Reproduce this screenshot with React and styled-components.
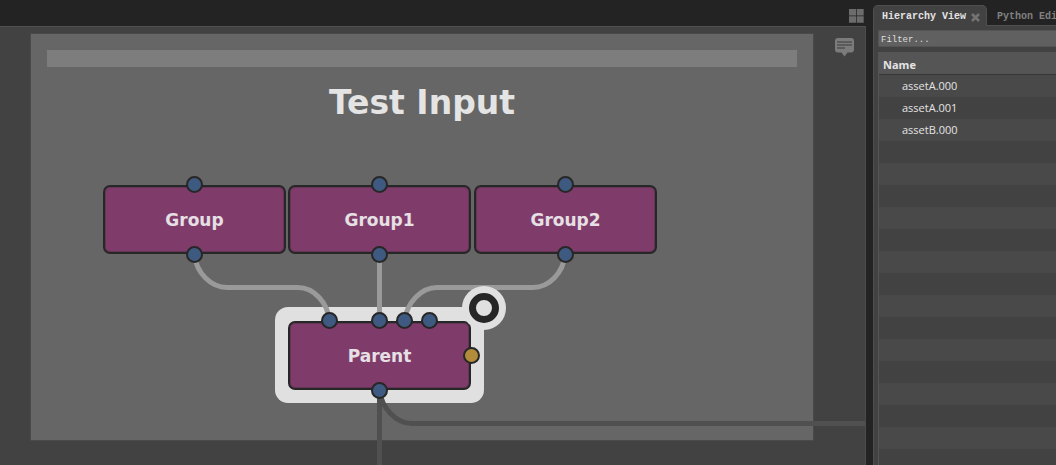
import React from "react";
import styled, { createGlobalStyle } from "styled-components";

const Global = createGlobalStyle`
  *, *::before, *::after { box-sizing: border-box; }
  body { margin: 0; background: #232323; }
`;

const Layout = styled.div`
  display: grid;
  grid-template-columns: minmax(0, 1fr) 183px;
  column-gap: 7px;
  min-height: 100vh;
  background: #232323;
`;

const GraphPane = styled.main`
  display: flex;
  flex-direction: column;
  min-width: 0;
`;

const Toolbar = styled.header`
  display: flex;
  justify-content: flex-end;
  align-items: flex-end;
  height: 26px;
  padding: 0 2px 3px 0;
`;

const IconButton = styled.button`
  display: flex;
  padding: 0;
  border: 0;
  background: none;
  cursor: pointer;
`;

const Canvas = styled.section`
  position: relative;
  flex: 1;
  overflow: hidden;
  background: #424242;
  border-top: 1px solid #505050;
  border-right: 1px solid #4b4b4b;
`;

const NoteButton = styled(IconButton)`
  position: absolute;
  top: 11px;
  right: 11px;
`;

const Backdrop = styled.div`
  position: absolute;
  left: 31px;
  top: 7px;
  width: 782px;
  height: 406px;
  padding: 16px;
  background: #666666;
  box-shadow: 0 0 0 1px #4a4a4a;
`;

const BackdropHandle = styled.div`
  height: 17px;
  background: #7d7d7d;
`;

const BackdropTitle = styled.h1`
  margin: 16px 0 0;
  font: bold 33px/40px "DejaVu Sans", sans-serif;
  text-align: center;
  color: #e4e4e4;
`;

const Halo = styled.div`
  position: absolute;
  left: ${(p) => p.$x}px;
  top: ${(p) => p.$y}px;
  width: 209px;
  height: 96px;
  border-radius: 13px;
  background: #e0e0e0;
`;

const Wires = styled.svg`
  position: absolute;
  inset: 0;
  width: 100%;
  height: 100%;
  fill: none;
  stroke-width: 5px;
`;

const NodeBox = styled.div`
  position: absolute;
  left: ${(p) => p.$x}px;
  top: ${(p) => p.$y}px;
  display: flex;
  align-items: center;
  justify-content: center;
  width: 183px;
  height: 69px;
  border: 2px solid #272727;
  border-radius: 7px;
  background: #7f3c6b;
  box-shadow: inset 0 0 0 1px rgba(39, 39, 39, 0.3);
  color: #e6e0e4;
  font: bold 17px/20px "DejaVu Sans", sans-serif;
`;

const Port = styled.span`
  position: absolute;
  left: ${(p) => p.$x}px;
  top: ${(p) => p.$y}px;
  width: 17px;
  height: 17px;
  margin: -9px 0 0 -9px;
  border: 2px solid #272727;
  border-radius: 50%;
  background: ${(p) => (p.$kind === "param" ? "#b38c3b" : "#3f5a80")};
`;

const ViewFlag = styled.span`
  position: absolute;
  left: ${(p) => p.$x}px;
  top: ${(p) => p.$y}px;
  display: flex;
  align-items: center;
  justify-content: center;
  width: 44px;
  height: 44px;
  border-radius: 50%;
  background: #e0e0e0;

  &::after {
    content: "";
    width: 30px;
    height: 30px;
    border: 7px solid #262626;
    border-radius: 50%;
  }
`;

const SidePane = styled.aside`
  display: flex;
  flex-direction: column;
  min-width: 0;
  padding-top: 5px;
  overflow: hidden;
`;

const TabBar = styled.div`
  display: flex;
  height: 20px;
`;

const Tab = styled.button`
  flex: none;
  display: flex;
  align-items: center;
  gap: 5px;
  height: ${(p) => (p.$active ? 21 : 20)}px;
  padding: ${(p) => (p.$active ? "2px 6px 0 8px" : "3px 9px 0 9px")};
  border: 1px solid ${(p) => (p.$active ? "#4f4f4f" : "transparent")};
  border-bottom: 0;
  border-radius: 5px 5px 0 0;
  background: ${(p) => (p.$active ? "#424242" : "transparent")};
  color: ${(p) => (p.$active ? "#e4e4e4" : "#808080")};
  font: bold 10px/14px "Liberation Mono", monospace;
  white-space: nowrap;
  z-index: 1;
`;

const PanelBody = styled.div`
  flex: 1;
  display: flex;
  flex-direction: column;
  gap: 5px;
  padding: 4px 0 0 4px;
  border: 1px solid #4f4f4f;
  border-width: 1px 0 0 1px;
  background: #424242;
`;

const Filter = styled.input`
  width: 100%;
  height: 17px;
  padding: 3px 2px 0;
  border: 1px solid #545454;
  border-right: 0;
  border-radius: 2px 0 0 2px;
  background: #606060;
  color: #dedede;
  font: 9px/12px "Liberation Mono", monospace;

  &::placeholder { color: #dedede; opacity: 1; }
`;

const TreeArea = styled.div`
  flex: 1;
  border-left: 1px solid #555555;
  background: repeating-linear-gradient(#494949 0 22px, #424242 22px 44px) 0 23px;
`;

const Tree = styled.table`
  width: 100%;
  border-spacing: 0;
  font: 11px/20px "Open Sans", sans-serif;
  color: #e4e4e4;
  text-align: left;
`;

const HeadCell = styled.th`
  height: 23px;
  padding: 4px 4px 0;
  border-bottom: 1px solid #363636;
  background: #555555;
  line-height: 18px;
  font-weight: bold;
`;

const Cell = styled.td`
  height: 22px;
  padding: 1px 0 1px 23px;
  background: ${(p) => (p.$odd ? "#424242" : "#494949")};
`;

const groups = [
  { name: "Group", x: 103 },
  { name: "Group1", x: 288 },
  { name: "Group2", x: 474 },
];
const parentInputs = [330, 380, 405, 430];
const assets = ["assetA.000", "assetA.001", "assetB.000"];

function GraphWires() {
  return (
    <Wires aria-hidden="true">
      <g stroke="#9a9a9a">
        <path d="M194.500 228 C196.500 246 211 260.500 227 260.500 H298 C314 260.500 328 276 329.500 294" />
        <path d="M379.500 228 V294" />
        <path d="M565 228 C563 246 549 260.500 533 260.500 H437 C421 260.500 406.500 276 404.500 294" />
      </g>
      <g stroke="#505050">
        <path d="M379.500 363 V4000" />
        <path d="M379.500 363 C381.500 381 396 396.500 412 396.500 H6000" />
      </g>
    </Wires>
  );
}

export default function App() {
  return (
    <Layout>
      <Global />
      <GraphPane>
        <Toolbar>
          <IconButton aria-label="Pane layout">
            <svg width="15" height="14" viewBox="0 0 15 14" fill="#6c6c6c">
              <path d="M0 0h7v6.500H0zM7.700 0h7v6.500h-7zM0 7.200h7v6.500H0zM7.700 7.200h7v6.500h-7z" />
            </svg>
          </IconButton>
        </Toolbar>
        <Canvas>
          <Backdrop>
            <BackdropHandle />
            <BackdropTitle>Test Input</BackdropTitle>
          </Backdrop>
          <Halo $x={275} $y={280} />
          <GraphWires />
          {groups.map((g) => (
            <React.Fragment key={g.name}>
              <NodeBox $x={g.x} $y={158}>{g.name}</NodeBox>
              <Port $x={g.x + 92} $y={158} />
              <Port $x={g.x + 92} $y={228} />
            </React.Fragment>
          ))}
          <NodeBox $x={288} $y={294}>Parent</NodeBox>
          {parentInputs.map((x) => <Port key={x} $x={x} $y={294} />)}
          <Port $x={380} $y={364} />
          <Port $x={472} $y={329} $kind="param" />
          <ViewFlag $x={462} $y={259} />
          <NoteButton aria-label="Annotations">
            <svg width="19" height="19" viewBox="0 0 19 19">
              <path fill="#7b7b7b" d="M3 0h13a3 3 0 0 1 3 3v8.500a3 3 0 0 1-3 3h-3.500l-3 4-3-4H3a3 3 0 0 1-3-3V3a3 3 0 0 1 3-3z" />
              <path stroke="#505050" strokeWidth="1.600" d="M2 4h15M2 7h15M2 10h8" />
            </svg>
          </NoteButton>
        </Canvas>
      </GraphPane>
      <SidePane>
        <TabBar role="tablist">
          <Tab role="tab" aria-selected="true" $active>
            Hierarchy View
            <svg width="9" height="9" viewBox="0 0 9 9" stroke="#737373" strokeWidth="2.600" aria-hidden="true">
              <path d="M1 1l7 7M8 1l-7 7" />
            </svg>
          </Tab>
          <Tab role="tab" aria-selected="false">Python Editor</Tab>
        </TabBar>
        <PanelBody>
          <Filter placeholder="Filter..." aria-label="Filter" />
          <TreeArea>
            <Tree>
              <thead>
                <tr><HeadCell scope="col">Name</HeadCell></tr>
              </thead>
              <tbody>
                {assets.map((name, i) => (
                  <tr key={name}><Cell $odd={i % 2 === 1}>{name}</Cell></tr>
                ))}
              </tbody>
            </Tree>
          </TreeArea>
        </PanelBody>
      </SidePane>
    </Layout>
  );
}
